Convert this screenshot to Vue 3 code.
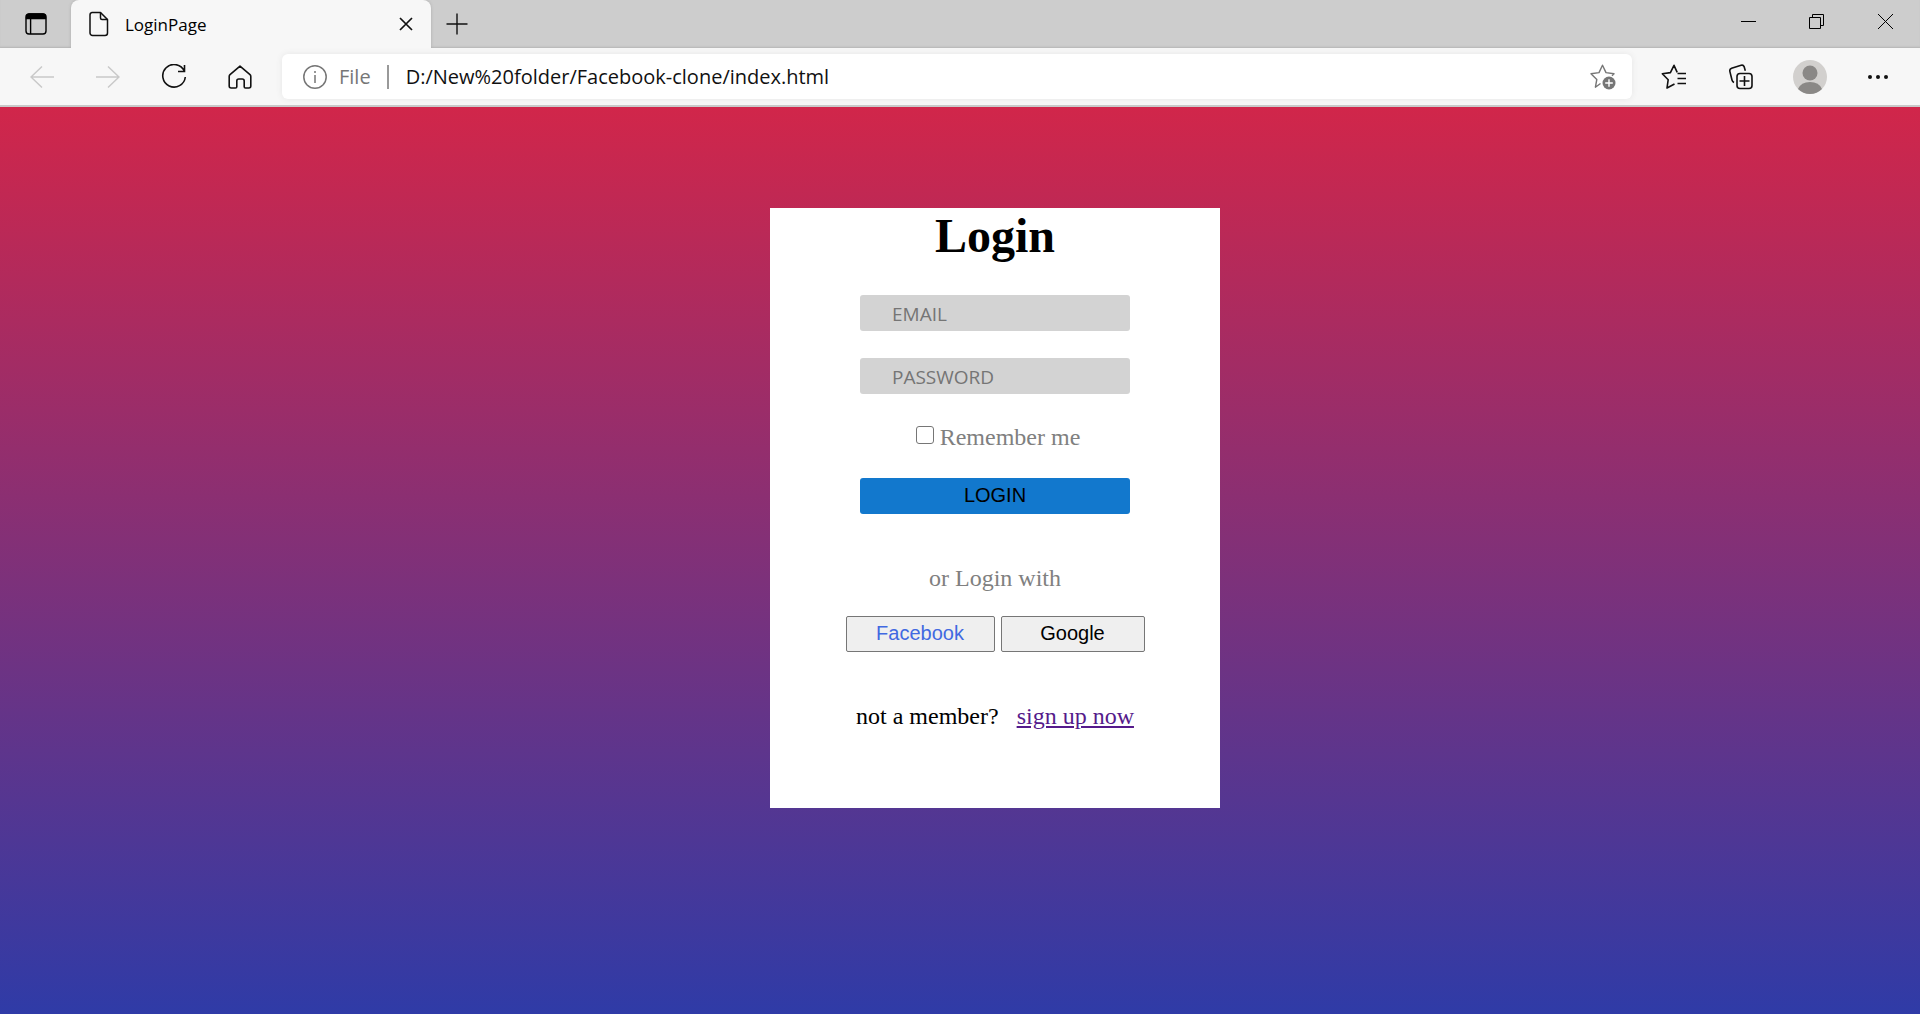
<script setup>
import { ref } from 'vue'

const address = ref('D:/New%20folder/Facebook-clone/index.html')
const email = ref('')
const password = ref('')
const remember = ref(false)
</script>

<template>
  <div class="window">
    <header class="chrome">
      <div class="tabstrip">
        <button class="tab-actions" aria-label="Tab actions menu">
          <svg width="22" height="22" viewBox="0 0 22 22" fill="none" stroke="#000" stroke-width="1.4">
            <rect x="1" y="1" width="20" height="20" rx="3" />
            <path d="M5.6 5v16" />
            <path d="M1.5 5.5V4a3 3 0 0 1 3-3h13a3 3 0 0 1 3 3v1.500z" fill="#000" />
          </svg>
        </button>
        <div class="tab">
          <svg width="20" height="26" viewBox="0 0 20 26" fill="none" stroke="#111" stroke-width="1.5" stroke-linejoin="round">
            <path d="M3 1.500h8.500L18.500 8.500v13.500a2.500 2.500 0 0 1-2.500 2.500H3.500A2.500 2.500 0 0 1 1 22V4A2.500 2.500 0 0 1 3 1.500z" />
            <path d="M11.500 1.500V7a1.500 1.500 0 0 0 1.500 1.500h5.500" />
          </svg>
          <span class="tab-title">LoginPage</span>
          <button aria-label="Close tab">
            <svg width="14" height="14" viewBox="0 0 14 14" stroke="#111" stroke-width="1.7"><path d="M1 1l12 12M13 1L1 13" /></svg>
          </button>
        </div>
        <button class="new-tab" aria-label="New tab">
          <svg width="22" height="22" viewBox="0 0 22 22" stroke="#111" stroke-width="1.4"><path d="M11 .5v21M.5 11h21" /></svg>
        </button>
        <div class="window-controls">
          <button aria-label="Minimize">
            <svg width="16" height="16" viewBox="0 0 16 16" stroke="#000"><path d="M1 7.500h15" /></svg>
          </button>
          <button aria-label="Restore">
            <svg width="16" height="16" viewBox="0 0 16 16" fill="none" stroke="#000"><path d="M.5 3.500h11v11H.5zM3.500 3.500v-3h11v11h-3" /></svg>
          </button>
          <button aria-label="Close">
            <svg width="16" height="16" viewBox="0 0 16 16" stroke="#000"><path d="M0 0l15 15M15 0l-15 15" /></svg>
          </button>
        </div>
      </div>

      <div class="toolbar">
        <nav class="nav">
          <button aria-label="Back">
            <svg width="24" height="24" viewBox="0 0 24 24" fill="none" stroke="#c9c9c9" stroke-width="1.500"><path d="M24 12H1M12 1.500L1 12l11 10.500" /></svg>
          </button>
          <button aria-label="Forward">
            <svg width="24" height="24" viewBox="0 0 24 24" fill="none" stroke="#c9c9c9" stroke-width="1.500"><path d="M0 12h23M12 1.500L23 12 12 22.500" /></svg>
          </button>
          <button aria-label="Refresh">
            <svg width="26" height="26" viewBox="0 0 26 26" fill="none" stroke="#111" stroke-width="1.600"><path d="M23.300 7A11.300 11.300 0 1 0 24.300 13M23.500 1v6.500H17" /></svg>
          </button>
          <button aria-label="Home">
            <svg width="24" height="24" viewBox="0 0 24 24" fill="none" stroke="#111" stroke-width="1.600" stroke-linejoin="round"><path d="M12 1.200L22 9.600q.8.700.8 1.800V21q0 2-2 2h-3.300q-1.300 0-1.300-1.300V16q0-2-2-2h-3.400q-2 0-2 2v5.700Q8.800 23 7.500 23H3.200q-2 0-2-2v-9.600q0-1.100.8-1.800z" /></svg>
          </button>
        </nav>
        <div class="address-bar">
          <svg width="24" height="24" viewBox="0 0 24 24" fill="none" stroke="#767676" stroke-width="1.500"><circle cx="12" cy="12" r="11.200" /><path d="M12 10v8M12 6v2" /></svg>
          <span class="scheme">File</span>
          <input v-model="address" aria-label="Address" type="text" spellcheck="false">
          <button aria-label="Add this page to favorites">
            <svg width="26" height="26" viewBox="0 0 26 26" fill="none" stroke="#767676" stroke-width="1.400" stroke-linejoin="round">
              <path d="M10.500 19.500L5.400 23.200 6.800 15.500 1 9.800l8-1.200L12.500 1.200 16 8.600l8 1.200-2 2" />
              <circle cx="19" cy="19" r="6.500" fill="#767676" stroke="none" />
              <path d="M19 15.200v7.600M15.200 19h7.600" stroke="#fff" />
            </svg>
          </button>
        </div>
        <div class="tools">
          <button aria-label="Favorites">
            <svg width="26" height="26" viewBox="0 0 26 26" fill="none" stroke="#111" stroke-width="1.600" stroke-linejoin="round"><path d="M13.500 20L6 24l1.200-8.300L1.300 9.800l8.100-1.200L13 1.300l3.200 7M16.500 9.500H25M16.500 14.500H25M16.500 19.500H25" /></svg>
          </button>
          <button aria-label="Collections">
            <svg width="26" height="26" viewBox="0 0 26 26" fill="none" stroke="#111" stroke-width="1.600"><rect x="8" y="9.500" width="15" height="15" rx="3" /><path d="M15.500 12v10M10.500 17h10M5 18.500q-1.600-.8-2-2.500L.9 7.600Q.3 5 2.600 4.200l9.500-2.900q2.200-.6 3 1.300l1.200 4.200" /></svg>
          </button>
          <button aria-label="Profile">
            <svg width="34" height="34" viewBox="0 0 34 34"><circle cx="17" cy="17" r="17" fill="#d2d0ce" /><circle cx="17" cy="13" r="7.500" fill="#8a8886" /><path d="M5 29q3-7 12-7t12 7a17 17 0 0 1-24 0z" fill="#8a8886" /></svg>
          </button>
          <button aria-label="Settings and more">
            <svg width="20" height="6" viewBox="0 0 20 6" fill="#111"><circle cx="2" cy="3" r="2" /><circle cx="10" cy="3" r="2" /><circle cx="18" cy="3" r="2" /></svg>
          </button>
        </div>
      </div>
    </header>

    <main class="page">
      <form class="card" @submit.prevent>
        <h1>Login</h1>
        <input v-model="email" class="field" type="email" placeholder="EMAIL" aria-label="Email">
        <input v-model="password" class="field" type="password" placeholder="PASSWORD" aria-label="Password">
        <label class="remember"><input v-model="remember" type="checkbox">Remember me</label>
        <button class="submit" type="submit">LOGIN</button>
        <p class="alternative">or Login with</p>
        <div class="providers">
          <button class="facebook" type="button">Facebook</button>
          <button class="google" type="button">Google</button>
        </div>
        <p class="signup">not a member? <a href="#">sign up now</a></p>
      </form>
    </main>
  </div>
</template>

<style>
body {
  margin: 0;
}
</style>

<style scoped>
.window {
  min-height: 100vh;
  display: flex;
  flex-direction: column;
}

button,
input {
  box-sizing: border-box;
  margin: 0;
  padding: 0;
}

svg {
  display: block;
  flex: none;
}

.chrome {
  background: #f7f7f7;
  border-bottom: 2px solid #c9c9c9;
  font-family: "Open Sans", "Noto Sans", sans-serif;
}

.chrome button {
  display: flex;
  align-items: center;
  justify-content: center;
  border: 0;
  background: none;
}

.tabstrip {
  display: flex;
  height: 48px;
  background: #cdcdcd;
  box-shadow: inset 0 -2px 2px -1px #b4b4b4;
}

.tab-actions {
  width: 71px;
}

.tab {
  display: flex;
  align-items: center;
  width: 360px;
  box-sizing: border-box;
  padding: 0 18px;
  border-radius: 8px 8px 0 0;
  background: #f7f7f7;
  box-shadow: 0 0 3px #aaa;
  clip-path: inset(0 -4px 0 -4px);
}

.tab-title {
  flex: 1;
  margin-left: 16px;
  font-size: 17px;
}

.new-tab {
  width: 52px;
}

.window-controls {
  display: flex;
  margin-left: auto;
  height: 44px;
}

.window-controls button {
  width: 69px;
}

.toolbar {
  display: flex;
  align-items: center;
  height: 57px;
}

.nav {
  display: flex;
  padding: 0 9px;
}

.nav button {
  width: 66px;
  height: 48px;
}

.address-bar {
  display: flex;
  flex: 1;
  align-items: center;
  height: 45px;
  box-sizing: border-box;
  padding: 0 16px 0 21px;
  border-radius: 6px;
  background: #fff;
  box-shadow: 0 0 6px #e6e6e6;
}

.scheme {
  margin-left: 12px;
  padding-right: 16px;
  border-right: 2px solid #999;
  color: #767676;
  font-size: 20px;
  line-height: 24px;
}

.address-bar input {
  flex: 1;
  min-width: 0;
  margin-left: 17px;
  border: 0;
  outline: 0;
  background: none;
  color: #111;
  font-family: inherit;
  font-size: 20px;
}

.tools {
  display: flex;
  padding: 0 8px;
}

.tools button {
  width: 68px;
  height: 48px;
}

.page {
  flex: 1;
  box-sizing: border-box;
  padding: 101px 0 101px 70px;
  background: linear-gradient(#d1264a, #2f3ba7);
  font-family: "Liberation Serif", "Times New Roman", serif;
  font-size: 24px;
  line-height: 28px;
}

.card {
  display: flex;
  flex-direction: column;
  align-items: center;
  width: 450px;
  min-height: 600px;
  box-sizing: border-box;
  margin: 0 auto;
  background: #fff;
}

h1 {
  margin: 0 0 31px;
  font-size: 48px;
  line-height: 56px;
}

.field {
  width: 270px;
  height: 36px;
  margin-bottom: 27px;
  padding: 2px 32px 0;
  border: 0;
  border-radius: 3px;
  background: #d3d3d3;
  font-family: "Open Sans", "Noto Sans", sans-serif;
  font-size: 19px;
}

.field::placeholder {
  color: #757575;
}

.remember {
  display: flex;
  align-items: center;
  gap: 6px;
  margin: 2px 0 27px;
  padding-left: 6px;
  color: #808080;
}

.remember input {
  appearance: none;
  width: 18px;
  height: 18px;
  margin-bottom: 4px;
  border: 1px solid #767676;
  border-radius: 3px;
  background: #fff;
}

.remember input:checked {
  background: #1278cd;
}

.submit,
.providers button {
  height: 36px;
  padding-bottom: 2px;
  border-radius: 3px;
  color: #000;
  font-family: "Liberation Sans", Arial, sans-serif;
  font-size: 20px;
}

.submit {
  width: 270px;
  border: 0;
  background: #1278cd;
}

.alternative {
  margin: 50px 0 24px;
  color: #808080;
}

.providers {
  display: flex;
  gap: 6px;
}

.providers button {
  border: 1px solid #767676;
  border-radius: 2px;
  background: #efefef;
}

.providers .facebook {
  width: 149px;
  color: #4169e1;
}

.providers .google {
  width: 144px;
}

.signup {
  margin: 50px 0 0;
}

.signup a {
  margin-left: 12px;
  color: #551a8b;
}
</style>
